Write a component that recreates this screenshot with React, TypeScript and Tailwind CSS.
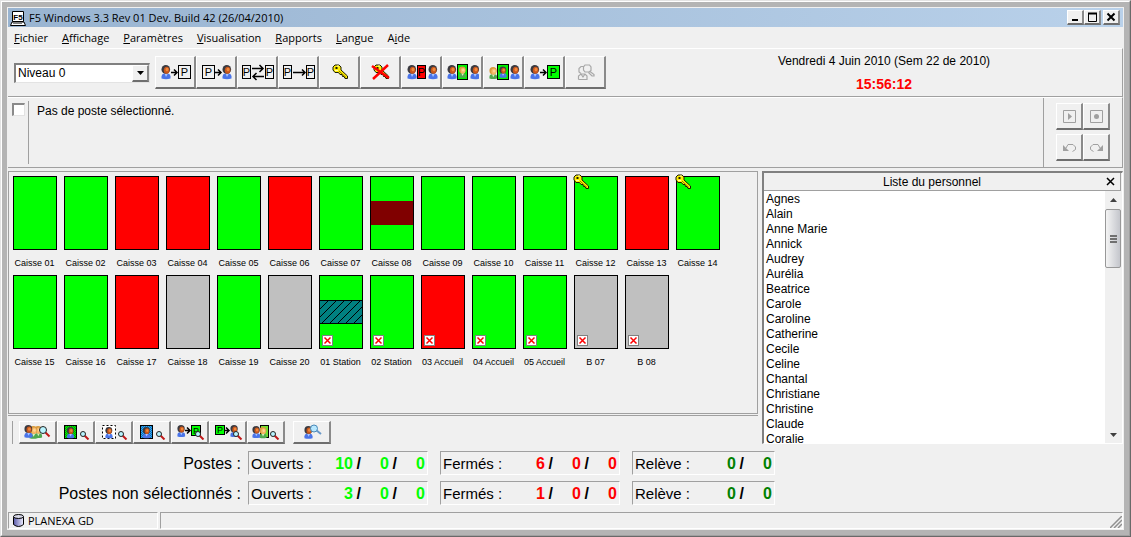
import type { ReactNode } from "react";

type Tone = "blue" | "green";

const Person = ({ x, y = 2, tone = "blue", scale = 1 }: { x: number; y?: number; tone?: Tone; scale?: number }) => {
  const green = tone === "green";
  return (
    <g transform={`translate(${x} ${y}) scale(${scale})`}>
      <path
        d="M0.5 13.5V11.5Q0.5 8.8 3 8.5H7Q9.5 8.8 9.5 11.5V13.5Q5 14.8 0.5 13.5Z"
        fill={green ? "#4fa84f" : "#4a74e8"}
      />
      <path d="M3.5 8.5L5 12L7 8.5Z" fill={green ? "#d8f0c0" : "#a8c4ff"} />
      <circle cx="4.8" cy="4.4" r="4.3" fill={green ? "#d89a3c" : "#3a3a40"} />
      <ellipse cx="5.6" cy="5.2" rx="2.8" ry="3.5" fill={green ? "#f4b868" : "#c8561c"} />
      <ellipse cx="6" cy="4.6" rx="1.5" ry="1.8" fill={green ? "#ffd494" : "#f08a3c"} />
    </g>
  );
};

const PBox = ({
  x,
  y = 2,
  w = 13,
  h = 14,
  fill = "#f0f0f0",
}: {
  x: number;
  y?: number;
  w?: number;
  h?: number;
  fill?: string;
}) => (
  <g>
    <rect x={x + 0.5} y={y + 0.5} width={w - 1} height={h - 1} fill={fill} stroke="#000" />
    <text
      x={x + w / 2}
      y={y + h / 2 + (h > 11 ? 4 : 3)}
      textAnchor="middle"
      fontSize={h > 11 ? 11 : 9}
      fontFamily="Liberation Sans, sans-serif"
      fill="#000"
    >
      P
    </text>
  </g>
);

const Arrow = ({ x, y = 9.5, w = 6 }: { x: number; y?: number; w?: number }) => (
  <path
    d={`M${x} ${y}h${w}m-3 -3l3 3l-3 3`}
    fill="none"
    stroke="#000"
    strokeWidth="1.5"
  />
);

const Glass = ({ x, y, r = 2.5 }: { x: number; y: number; r?: number }) => (
  <g>
    <path d={`M${x + r - 1} ${y + r - 1}l4 4`} stroke="#c01818" strokeWidth="2" />
    <circle cx={x} cy={y} r={r} fill="#b8f4ff" stroke="#222" />
  </g>
);

const KeyShape = () => (
  <g>
    <path
      d="M1 3L3 1H7L9 3V6L15.5 12V14.5H13L12 12.5H10.5L10 10.5H8L6.5 8.5H3L1 6Z"
      fill="#ffee00"
      stroke="#1c1c00"
      strokeWidth="1"
    />
    <path d="M7 7L14 13.5" stroke="#8c7c00" strokeWidth="1" />
    <path d="M3.5 3h2v2h-2z" fill="#1c1c00" />
    <path d="M5 2h2M3 6.5h3" stroke="#fffbb0" strokeWidth="1" />
  </g>
);

const Checker = ({ id, color }: { id: string; color: string }) => (
  <g>
    <defs>
      <pattern id={id} width="2" height="2" patternUnits="userSpaceOnUse">
        <rect width="2" height="2" fill={color} />
        <path d="M0 0h1v1h-1zM1 1h1v1h-1z" fill="#000" fillOpacity="0.35" />
      </pattern>
    </defs>
    <rect x="5.5" y="1.5" width="12" height="13" fill={`url(#${id})`} stroke="#000" />
  </g>
);

const mainTools: { label: string; icon: ReactNode; disabled?: boolean }[] = [
  { label: "Affecter une personne", icon: <><Person x={3} /><Arrow x={13} /><PBox x={20} /></> },
  { label: "Retirer une personne", icon: <><PBox x={3} /><Arrow x={16} /><Person x={23} /></> },
  {
    label: "Échanger les postes",
    icon: (
      <>
        <PBox x={2} w={9} />
        <path
          d="M12 5.5h11m-3.5 -3.5l3.5 3.5l-3.5 3.5M24 13.5h-11m3.5 -3.5l-3.5 3.5l3.5 3.5"
          fill="none"
          stroke="#000"
          strokeWidth="1.5"
        />
        <PBox x={25} w={9} />
      </>
    ),
  },
  { label: "Déplacer vers un poste", icon: <><PBox x={2} w={9} /><Arrow x={12} w={12} /><PBox x={25} w={9} /></> },
  { label: "Clé", icon: <g transform="translate(10 1)"><KeyShape /></g> },
  {
    label: "Retirer la clé",
    icon: (
      <>
        <g transform="translate(10 1)"><KeyShape /></g>
        <path d="M9 3L26 15M25 2L10 16" stroke="#ff0000" strokeWidth="2.5" />
      </>
    ),
  },
  { label: "Fermer le poste", icon: <><Person x={3} /><PBox x={13} w={9} fill="#ff0000" /><Person x={24} /></> },
  {
    label: "Relève",
    icon: (
      <>
        <Person x={2} />
        <rect x="12.5" y="1.5" width="10" height="15" fill="#00f000" stroke="#000" />
        <Person x={13.5} y={3.5} tone="green" scale={0.8} />
        <Person x={25} />
      </>
    ),
  },
  {
    label: "Remplacer",
    icon: (
      <>
        <Person x={3} y={4} tone="green" scale={0.85} />
        <rect x="11.5" y="1.5" width="11" height="15" fill="#00f000" stroke="#000" />
        <Person x={13} y={3.5} scale={0.8} />
        <Person x={24} />
      </>
    ),
  },
  { label: "Ouvrir le poste", icon: <><Person x={3} /><Arrow x={13} /><PBox x={20} fill="#00ff00" /></> },
  {
    label: "Rechercher une personne",
    disabled: true,
    icon: (
      <g fill="none" stroke="#a8a8a8" strokeWidth="1.2">
        <path d="M16 3.5H13L11 5.5V9L13 10.5M10.5 16.5V13L13 11H17L19 13V16.5H10.5M13 11L15 14L17 11" />
        <path d="M17 2H21.5L23 4V7.5L21 9H17L15.5 7V4ZM22 8.5L26 11.5V13H24L20.5 9.5" />
      </g>
    ),
  },
];

const viewTools: { label: string; icon: ReactNode }[] = [
  {
    label: "Voir le personnel",
    icon: (
      <>
        <Person x={13} y={2} tone="green" scale={0.85} />
        <Person x={8} y={2} tone="green" scale={0.9} />
        <Person x={3} y={1} scale={0.9} />
        <Glass x={22} y={6} r={3.5} />
      </>
    ),
  },
  { label: "Voir les présents", icon: <><Checker id="chk-green" color="#00f000" /><Person x={7.5} y={3} scale={0.8} /><Glass x={24} y={10} /></> },
  {
    label: "Voir les absents",
    icon: (
      <>
        <rect x="5.5" y="1.5" width="13" height="13" fill="#fff" stroke="#000" strokeDasharray="2 2" />
        <Person x={8} y={3} scale={0.8} />
        <Glass x={24} y={10} />
      </>
    ),
  },
  { label: "Voir les pauses", icon: <><Checker id="chk-blue" color="#28a8ff" /><Person x={7.5} y={3} scale={0.8} /><Glass x={24} y={10} /></> },
  {
    label: "Voir les affectations",
    icon: <><Person x={4} y={1} scale={0.85} /><Arrow x={12} y={6.5} w={5} /><PBox x={18} y={1} w={10} h={11} fill="#00ff00" /><Glass x={25} y={10} /></>,
  },
  {
    label: "Voir les retraits",
    icon: <><PBox x={4} y={1} w={10} h={10} fill="#00ff00" /><Arrow x={14} y={6.5} w={4} /><Person x={19} y={1} scale={0.85} /><Glass x={25} y={10} /></>,
  },
  {
    label: "Voir les relèves",
    icon: (
      <>
        <rect x="11.5" y="1.5" width="8" height="12" fill="#70e030" stroke="#000" />
        <Person x={10} y={3} tone="green" scale={0.8} />
        <Person x={3} y={2} scale={0.85} />
        <Glass x={24} y={10} />
      </>
    ),
  },
];

type Poste = { name: string; color: string; key?: boolean; cross?: boolean; band?: "dark" | "hatch" };

const GREEN = "bg-[#00ff00]";
const RED = "bg-[#ff0000]";
const GRAY = "bg-[#c0c0c0]";

const postes: Poste[] = [
  { name: "Caisse 01", color: GREEN },
  { name: "Caisse 02", color: GREEN },
  { name: "Caisse 03", color: RED },
  { name: "Caisse 04", color: RED },
  { name: "Caisse 05", color: GREEN },
  { name: "Caisse 06", color: RED },
  { name: "Caisse 07", color: GREEN },
  { name: "Caisse 08", color: GREEN, band: "dark" },
  { name: "Caisse 09", color: GREEN },
  { name: "Caisse 10", color: GREEN },
  { name: "Caisse 11", color: GREEN },
  { name: "Caisse 12", color: GREEN, key: true },
  { name: "Caisse 13", color: RED },
  { name: "Caisse 14", color: GREEN, key: true },
  { name: "Caisse 15", color: GREEN },
  { name: "Caisse 16", color: GREEN },
  { name: "Caisse 17", color: RED },
  { name: "Caisse 18", color: GRAY },
  { name: "Caisse 19", color: GREEN },
  { name: "Caisse 20", color: GRAY },
  { name: "01 Station", color: GREEN, band: "hatch", cross: true },
  { name: "02 Station", color: GREEN, cross: true },
  { name: "03 Accueil", color: RED, cross: true },
  { name: "04 Accueil", color: GREEN, cross: true },
  { name: "05 Accueil", color: GREEN, cross: true },
  { name: "B 07", color: GRAY, cross: true },
  { name: "B 08", color: GRAY, cross: true },
];

const personnel = [
  "Agnes", "Alain", "Anne Marie", "Annick", "Audrey", "Aurélia", "Beatrice", "Carole", "Caroline",
  "Catherine", "Cecile", "Celine", "Chantal", "Christiane", "Christine", "Claude", "Coralie",
];

const menus = ["Fichier", "Affichage", "Paramètres", "Visualisation", "Rapports", "Langue", "Aide"];

const stats = [
  { label: "Postes :", ouverts: [10, 0, 0], fermes: [6, 0, 0], releve: [0, 0] },
  { label: "Postes non sélectionnés :", ouverts: [3, 0, 0], fermes: [1, 0, 0], releve: [0, 0] },
];

const raised =
  "border-t border-l border-r-2 border-b-2 border-t-white border-l-white border-r-[#8a8a8a] border-b-[#6e6e6e] bg-[#f0f0f0] flex items-center justify-center shrink-0";

const sunken = "border border-t-[#a0a0a0] border-l-[#a0a0a0] border-r-white border-b-white";

const PosteTile = ({ poste }: { poste: Poste }) => (
  <li className="w-[51px] h-[99px]">
    <div className={`relative w-[44px] h-[74px] border border-black flex flex-col justify-center ${poste.color}`}>
      {poste.band === "dark" && <div className="h-6 bg-[#800000]" />}
      {poste.band === "hatch" && (
        <svg className="w-full h-6 border-y border-black bg-[#008080]">
          <defs>
            <pattern id="hatch" width="8" height="8" patternUnits="userSpaceOnUse">
              <path d="M-1 9L9 -1M-1 1L1 -1M7 9L9 7" stroke="#000" />
            </pattern>
          </defs>
          <rect width="100%" height="100%" fill="url(#hatch)" />
        </svg>
      )}
      {poste.key && (
        <svg className="absolute -left-0.5 -top-[3px]" width="17" height="16" viewBox="0 0 17 16">
          <KeyShape />
        </svg>
      )}
      {poste.cross && (
        <svg className="absolute left-0.5 bottom-0.5" width="11" height="11" viewBox="0 0 11 11">
          <rect x="0.5" y="0.5" width="10" height="10" fill="#fff" stroke="#808080" />
          <path d="M2.5 2.5L8.5 8.5M8.5 2.5L2.5 8.5" stroke="#ff0000" strokeWidth="1.5" />
        </svg>
      )}
    </div>
    <div className="w-[43px] mt-2 flex justify-center text-[9px] leading-[11px] whitespace-nowrap">
      {poste.name}
    </div>
  </li>
);

const StatBox = ({ label, values, color, width }: { label: string; values: number[]; color: string; width: string }) => (
  <div className={`${sunken} ${width} h-6 px-0.5 pt-px flex items-center`}>
    <span className="flex-1 text-[15px]">{label}</span>
    {values.map((value, i) => (
      <span key={i} className="flex font-bold">
        <span className={`w-7 text-right ${color}`}>{value}</span>
        {i < values.length - 1 && <span className="w-2 text-right">/</span>}
      </span>
    ))}
  </div>
);

const App: React.FC = () => {
  return (
    <div className="h-screen border border-t-[#e3e3e3] border-l-[#e3e3e3] border-r-[#696969] border-b-[#696969] font-['Liberation_Sans',Arial,sans-serif] text-[12px] leading-[15px] text-black select-none">
      <div className="h-full border border-t-white border-l-white border-r-[#a0a0a0] border-b-[#a0a0a0] bg-[#b4b4b4] p-[5px]">
        <div className="h-full border border-[#f0f0f0] bg-[#f0f0f0] flex flex-col">
          <header className="h-[19px] shrink-0 flex items-center pl-0.5 pr-[3px] bg-linear-to-r from-[#99b4d1] to-[#b9d1ea] font-['Open_Sans',sans-serif] text-[11px]">
            <svg width="16" height="16" viewBox="0 0 16 16">
              <path d="M2.5 1.5h11v10h-11z" fill="#fff" stroke="#000" />
              <path d="M2 12L0.5 15.5H15.5L14 12Z" fill="#fff" stroke="#000" />
              <path d="M3 13.5h9" stroke="#808080" />
              <text x="8" y="10" textAnchor="middle" fontSize="8" fontWeight="bold" fontFamily="Liberation Sans, sans-serif">
                F5
              </text>
            </svg>
            <h1 className="ml-[3px] flex-1">F5 Windows 3.3 Rev 01 Dev. Build 42 (26/04/2010)</h1>
            <button aria-label="Réduire" className={`${raised} w-[17px] h-[15px]`}>
              <svg width="12" height="10"><path d="M3 8h6" stroke="#000" strokeWidth="2" /></svg>
            </button>
            <button aria-label="Agrandir" className={`${raised} w-[17px] h-[15px]`}>
              <svg width="12" height="10">
                <path d="M2.5 1v8.5h8V1" fill="none" stroke="#000" />
                <path d="M2 1.5h9" stroke="#000" strokeWidth="2" />
              </svg>
            </button>
            <button aria-label="Fermer" className={`${raised} w-[17px] h-[15px] ml-0.5`}>
              <svg width="12" height="10"><path d="M2.5 1.5L9.5 8.5M9.5 1.5L2.5 8.5" stroke="#000" strokeWidth="2" /></svg>
            </button>
          </header>

          <nav className="h-[21px] shrink-0 flex items-center gap-3.5 px-1.5 font-['Open_Sans',sans-serif] text-[11px]">
            {menus.map((menu) => {
              const at = menu === "Aide" ? 1 : 0;
              return (
                <button key={menu}>
                  {menu.slice(0, at)}
                  <span className="underline">{menu[at]}</span>
                  {menu.slice(at + 1)}
                </button>
              );
            })}
          </nav>

          <section className="h-[49px] shrink-0 flex items-center border-t border-t-white border-b border-b-[#a0a0a0] border-r border-r-[#a0a0a0] pl-1.5">
            <div className="relative w-[136px] mr-[5px] shrink-0">
              <select
                aria-label="Niveau"
                className="appearance-none block w-full h-5 pl-0.5 bg-white rounded-none border-t-2 border-l-2 border-r border-b border-t-[#808080] border-l-[#808080] border-r-[#e3e3e3] border-b-[#e3e3e3] outline-none"
              >
                <option>Niveau 0</option>
              </select>
              <span className={`${raised} absolute right-px top-0.5 w-[17px] h-[17px] pointer-events-none`}>
                <svg width="7" height="4"><path d="M0 0h7L3.5 4Z" /></svg>
              </span>
            </div>
            <div className="flex">
              {mainTools.map((tool) => (
                <button key={tool.label} aria-label={tool.label} disabled={tool.disabled} className={`${raised} w-[41px] h-[33px]`}>
                  <svg className="shrink-0" width="34" height="18" viewBox="0 0 34 18">{tool.icon}</svg>
                </button>
              ))}
            </div>
            <div className="w-[476px] ml-auto pt-px text-center">
              <p>Vendredi 4 Juin 2010 (Sem 22 de 2010)</p>
              <p className="mt-2 text-[14px] font-bold text-[#ff0000]">15:56:12</p>
            </div>
          </section>

          <section className="h-[71px] shrink-0 flex border-t border-t-white border-b border-b-[#a0a0a0] border-r border-r-[#a0a0a0]">
            <label className="flex flex-1 py-[3px] pl-1">
              <input
                type="checkbox"
                className="appearance-none w-[13px] h-[13px] mt-0.5 bg-white border-t-2 border-l-2 border-r border-b border-t-[#8a8a8a] border-l-[#8a8a8a] border-r-[#e3e3e3] border-b-[#e3e3e3]"
              />
              <span className="ml-[3px] pl-2 pt-[3px] border-l border-l-[#a0a0a0]">Pas de poste sélectionné.</span>
            </label>
            <div className="w-[79px] border-l border-l-[#a0a0a0] pl-3 pt-[5px]">
              <div className="grid grid-cols-2 w-[54px] gap-y-1 text-[#a0a0a0]">
                <button aria-label="Lecture" disabled className={`${raised} h-[27px]`}>
                  <svg width="15" height="15"><path d="M1.5 1.5h12v12h-12z" fill="none" stroke="currentColor" /><path d="M6 4v7l4-3.5z" fill="currentColor" /></svg>
                </button>
                <button aria-label="Enregistrer" disabled className={`${raised} h-[27px]`}>
                  <svg width="15" height="15"><path d="M1.5 1.5h12v12h-12z" fill="none" stroke="currentColor" /><circle cx="7.5" cy="7.5" r="2.5" fill="currentColor" /></svg>
                </button>
                <button aria-label="Annuler" disabled className={`${raised} h-[27px]`}>
                  <svg width="15" height="15"><path d="M1 5v6h6z" fill="currentColor" /><path d="M4 8L6 4.5H11L13.5 7V9.5L10.5 11.5" fill="none" stroke="currentColor" /></svg>
                </button>
                <button aria-label="Rétablir" disabled className={`${raised} h-[27px]`}>
                  <svg width="15" height="15"><path d="M14 5v6h-6z" fill="currentColor" /><path d="M11 8L9 4.5H4L1.5 7V9.5L4.5 11.5" fill="none" stroke="currentColor" /></svg>
                </button>
              </div>
            </div>
          </section>

          <main className="flex-1 min-h-0 flex gap-1 mt-[3px]">
            <div className="flex-1 min-w-0 flex flex-col">
              <ul className="flex-1 min-h-0 border border-[#a0a0a0] pt-1 pl-1 flex flex-wrap content-start">
                {postes.map((poste) => <PosteTile key={poste.name} poste={poste} />)}
              </ul>
              <div className="h-[29px] mt-px pt-1 shrink-0 border-t border-t-[#a0a0a0] flex items-center">
                <div className="w-[3px] h-[23px] ml-0.5 mr-1.5 border-r border-r-[#a0a0a0]" />
                {viewTools.map((tool) => (
                  <button key={tool.label} aria-label={tool.label} className={`${raised} w-[38px] h-[23px]`}>
                    <svg className="shrink-0" width="34" height="16" viewBox="0 0 34 16">{tool.icon}</svg>
                  </button>
                ))}
                <button aria-label="Rechercher" className={`${raised} w-[38px] h-[23px] ml-2`}>
                  <svg className="shrink-0" width="34" height="16" viewBox="0 0 34 16">
                    <Person x={9} y={2} scale={0.9} />
                    <path d="M21 6L26 10" stroke="#6898c8" strokeWidth="2" />
                    <circle cx="19" cy="4.5" r="3.5" fill="#b8e8ff" stroke="#4888b8" />
                  </svg>
                </button>
              </div>
            </div>

            <aside className="w-[361px] shrink-0 flex flex-col border-t-2 border-l-2 border-r border-b border-t-[#808080] border-l-[#808080] border-r-white border-b-white">
              <div className="h-[18px] shrink-0 flex items-center border-b border-b-[#a0a0a0] border-r border-r-[#a0a0a0] mr-px">
                <h2 className="flex-1 pt-px text-center">Liste du personnel</h2>
                <button aria-label="Fermer la liste" className="w-5 flex justify-center">
                  <svg width="9" height="9"><path d="M1 1L8 8M8 1L1 8" stroke="#000" strokeWidth="1.5" /></svg>
                </button>
              </div>
              <div className="flex-1 min-h-0 flex bg-white">
                <ul className="flex-1 overflow-hidden pl-0.5 pt-px">
                  {personnel.map((name) => <li key={name}>{name}</li>)}
                </ul>
                <div className="w-[17px] pr-px bg-[#f0f0f0] flex flex-col items-center">
                  <svg className="mt-[7px] shrink-0" width="7" height="4"><path d="M0 4h7L3.5 0Z" fill="#404040" /></svg>
                  <div className="w-4 h-[59px] mt-[7px] shrink-0 rounded-[2px] border border-[#989898] bg-linear-to-r from-[#f4f4f4] to-[#c4c6cc] flex flex-col items-center justify-center gap-px">
                    <span className="w-[7px] h-0.5 bg-[#707070]" />
                    <span className="w-[7px] h-0.5 bg-[#707070]" />
                    <span className="w-[7px] h-0.5 bg-[#707070]" />
                  </div>
                  <svg className="mt-auto mb-1.5 shrink-0" width="7" height="4"><path d="M0 0h7L3.5 4Z" fill="#404040" /></svg>
                </div>
              </div>
            </aside>
          </main>

          <section className="shrink-0 flex flex-col gap-1.5 py-[7px] text-[16px] leading-5">
            {stats.map((row) => (
              <div key={row.label} className="flex items-center gap-3">
                <span className="w-[233px] -mr-[5px] pt-px text-right">{row.label}</span>
                <StatBox label="Ouverts :" values={row.ouverts} color="text-[#00ff00]" width="w-[180px]" />
                <StatBox label="Fermés :" values={row.fermes} color="text-[#ff0000]" width="w-[180px]" />
                <StatBox label="Relève :" values={row.releve} color="text-[#008000]" width="w-[143px]" />
              </div>
            ))}
          </section>

          <footer className="h-[17px] shrink-0 flex gap-0.5 font-['Open_Sans',sans-serif] text-[11px]">
            <div className={`${sunken} w-[150px] flex items-center pl-1 gap-1`}>
              <svg width="11" height="13" viewBox="0 0 11 13">
                <defs>
                  <linearGradient id="cyl">
                    <stop offset="0" stopColor="#5858a8" />
                    <stop offset="1" stopColor="#f0f0ff" />
                  </linearGradient>
                </defs>
                <path d="M0.5 2.5V10.5Q5.5 14.5 10.5 10.5V2.5" fill="url(#cyl)" stroke="#000" />
                <ellipse cx="5.5" cy="2.5" rx="5" ry="2" fill="#d8d8e8" stroke="#000" />
              </svg>
              <span>PLANEXA GD</span>
            </div>
            <div className={`${sunken} flex-1 flex justify-end items-end`}>
              <svg width="12" height="12"><path d="M0 12L12 0M4 12L12 4M8 12L12 8" stroke="#909090" strokeWidth="1.5" /></svg>
            </div>
          </footer>
        </div>
      </div>
    </div>
  );
};

export default App;
